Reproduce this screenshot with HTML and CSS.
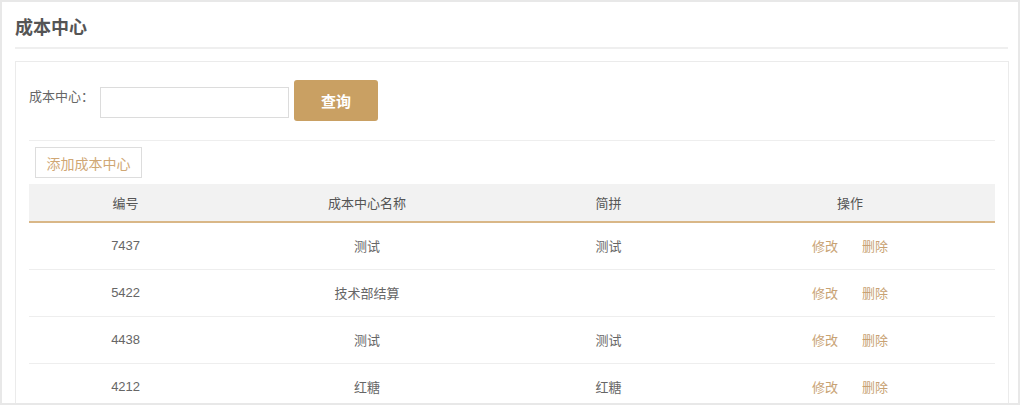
FILE: index.html
```html
<!DOCTYPE html>
<html lang="zh-CN">
<head>
    <meta charset="UTF-8">
    <title>成本中心</title>
    <link rel="stylesheet" href="styles.css">
</head>
<body>
    <div class="page">
        <h2 class="page-title">成本中心</h2>

        <div class="panel">
            <!-- 查询条件 -->
            <div class="search-row">
                <label class="search-label">成本中心：</label>
                <input type="text" class="search-input">
                <button class="search-btn">查询</button>
            </div>

            <div class="toolbar">
                <button class="add-btn">添加成本中心</button>
            </div>

            <!-- 列表 -->
            <table class="data-table">
                <thead>
                    <tr>
                        <th class="col-id">编号</th>
                        <th class="col-name">成本中心名称</th>
                        <th class="col-short">简拼</th>
                        <th class="col-op">操作</th>
                    </tr>
                </thead>
                <tbody>
                    <tr>
                        <td>7437</td>
                        <td>测试</td>
                        <td>测试</td>
                        <td><a href="#">修改</a><a href="#">删除</a></td>
                    </tr>
                    <tr>
                        <td>5422</td>
                        <td>技术部结算</td>
                        <td></td>
                        <td><a href="#">修改</a><a href="#">删除</a></td>
                    </tr>
                    <tr>
                        <td>4438</td>
                        <td>测试</td>
                        <td>测试</td>
                        <td><a href="#">修改</a><a href="#">删除</a></td>
                    </tr>
                    <tr>
                        <td>4212</td>
                        <td>红糖</td>
                        <td>红糖</td>
                        <td><a href="#">修改</a><a href="#">删除</a></td>
                    </tr>
                </tbody>
            </table>
        </div>
    </div>
</body>
</html>
```

FILE: styles.css
```css
* {
    margin: 0;
    padding: 0;
    box-sizing: border-box;
    font-family: "Liberation Sans", "Noto Sans CJK SC", sans-serif;
}

body {
    background: #fff;
    overflow: hidden;
}

.page {
    width: 1020px;
    height: 405px;
    border: 2px solid #e8e8e8;
    overflow: hidden;
}

/* 标题 */
.page-title {
    margin: 0 10px 0 13px;
    padding: 16px 0 9px 0;
    line-height: 20px;
    font-size: 18px;
    font-weight: bold;
    color: #555;
    border-bottom: 2px solid #efefef;
}

/* 内容面板 */
.panel {
    margin: 12px 9px 0 13px;
    padding: 0 13px;
    border: 1px solid #ebebeb;
    border-bottom: none;
    height: 400px;
}

.search-row {
    display: flex;
    align-items: flex-start;
    padding: 18px 0 19px 0;
    border-bottom: 1px solid #eeeeee;
}

.search-label {
    font-size: 13px;
    line-height: 20px;
    margin-top: 7px;
    color: #666;
    margin-right: 6px;
}

.search-input {
    width: 189px;
    height: 31px;
    margin-top: 7px;
    border: 1px solid #dcdcdc;
    outline: none;
}

.search-btn {
    width: 84px;
    height: 41px;
    margin-left: 5px;
    background: #c9a063;
    color: #fff;
    font-size: 15px;
    font-weight: bold;
    border: none;
    border-radius: 3px;
    cursor: pointer;
}

.toolbar {
    padding: 6px 0 6px 6px;
}

.add-btn {
    height: 31px;
    padding: 0 10px;
    min-width: 107px;
    background: #fff;
    border: 1px solid #dddddd;
    color: #d0a774;
    font-size: 14px;
    cursor: pointer;
}

/* 表格 */
.data-table {
    width: 966px;
    border-collapse: collapse;
    table-layout: fixed;
    font-size: 13px;
    color: #666;
}

.data-table th {
    height: 38px;
    background: #f2f2f2;
    font-weight: normal;
    color: #555;
    border-bottom: 2px solid #d9b787;
}

.col-id { width: 20%; }
.col-name { width: 30%; }
.col-short { width: 20%; }
.col-op { width: 30%; }

.data-table td {
    height: 47px;
    text-align: center;
    border-bottom: 1px solid #eeeeee;
}

.data-table td a {
    color: #c8a273;
    text-decoration: none;
    margin: 0 12px;
}
```
